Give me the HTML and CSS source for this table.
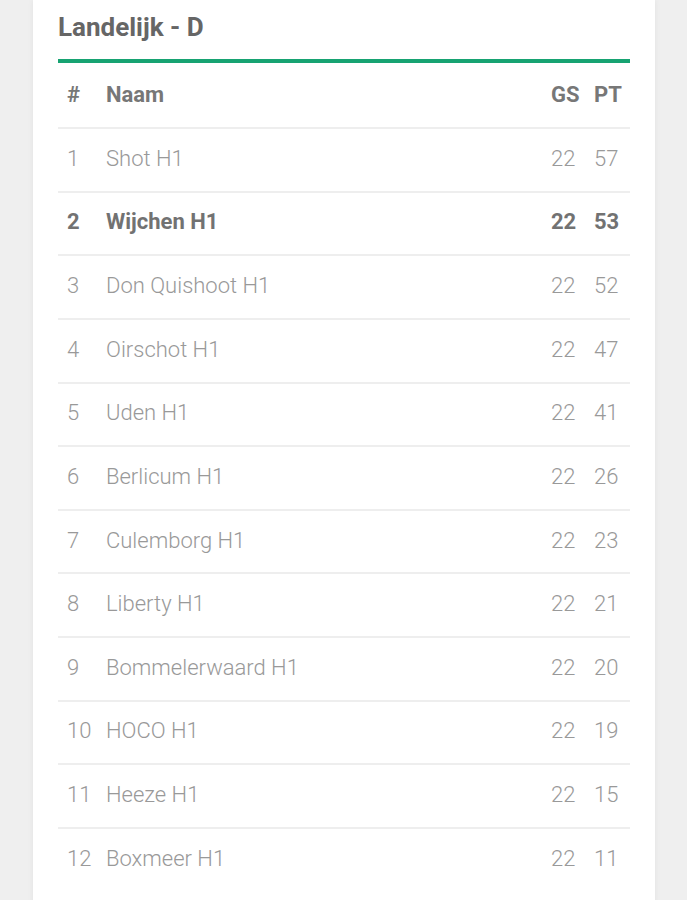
FILE: index.html
```html
<!DOCTYPE html>
<html lang="nl">
<head>
<meta charset="utf-8">
<title>Landelijk - D</title>
<link rel="stylesheet" href="styles.css">
</head>
<body>
<div class="page">
  <section class="card">
    <h2 class="title">Landelijk - D</h2>
    <div class="standings">
      <div class="row head">
        <span class="pos">#</span><span class="name">Naam</span><span class="gs">GS</span><span class="pt">PT</span>
      </div>
      <div class="row"><span class="pos">1</span><span class="name">Shot H1</span><span class="gs">22</span><span class="pt">57</span></div>
      <div class="row own"><span class="pos">2</span><span class="name">Wijchen H1</span><span class="gs">22</span><span class="pt">53</span></div>
      <div class="row"><span class="pos">3</span><span class="name">Don Quishoot H1</span><span class="gs">22</span><span class="pt">52</span></div>
      <div class="row"><span class="pos">4</span><span class="name">Oirschot H1</span><span class="gs">22</span><span class="pt">47</span></div>
      <div class="row"><span class="pos">5</span><span class="name">Uden H1</span><span class="gs">22</span><span class="pt">41</span></div>
      <div class="row"><span class="pos">6</span><span class="name">Berlicum H1</span><span class="gs">22</span><span class="pt">26</span></div>
      <div class="row"><span class="pos">7</span><span class="name">Culemborg H1</span><span class="gs">22</span><span class="pt">23</span></div>
      <div class="row"><span class="pos">8</span><span class="name">Liberty H1</span><span class="gs">22</span><span class="pt">21</span></div>
      <div class="row"><span class="pos">9</span><span class="name">Bommelerwaard H1</span><span class="gs">22</span><span class="pt">20</span></div>
      <div class="row"><span class="pos">10</span><span class="name">HOCO H1</span><span class="gs">22</span><span class="pt">19</span></div>
      <div class="row"><span class="pos">11</span><span class="name">Heeze H1</span><span class="gs">22</span><span class="pt">15</span></div>
      <div class="row"><span class="pos">12</span><span class="name">Boxmeer H1</span><span class="gs">22</span><span class="pt">11</span></div>
    </div>
  </section>
</div>
</body>
</html>
```

FILE: styles.css
```css
html, body {
  margin: 0;
  padding: 0;
  background: #efefef;
}

.page {
  padding: 0 32px 0 33px;
  min-height: 900px;
  box-sizing: border-box;
}

.card {
  background: #ffffff;
  min-height: 900px;
  padding: 13px 25px 0 25px;
  box-shadow: 0 0 6px rgba(0, 0, 0, 0.06);
  font-family: Roboto, "Liberation Sans", sans-serif;
}

.title {
  margin: 0;
  font-size: 26px;
  line-height: 29px;
  font-weight: 700;
  color: #666666;
  padding-bottom: 17px;
  border-bottom: 4px solid #17a372;
}

.row {
  display: grid;
  grid-template-columns: 39px 1fr 43px 45px;
  align-items: center;
  box-sizing: border-box;
  height: 63.64px;
  padding-bottom: 3px;
  border-top: 2px solid #eeeeee;
  font-size: 22px;
  font-weight: 300;
  color: #999999;
}

.row > span {
  padding-left: 9px;
  white-space: nowrap;
}

.row.head {
  height: 64px;
  padding-bottom: 1px;
  border-top: 0;
  font-size: 22px;
  font-weight: 700;
  color: #777777;
}

.row.own {
  font-weight: 700;
  color: #727272;
}
```
